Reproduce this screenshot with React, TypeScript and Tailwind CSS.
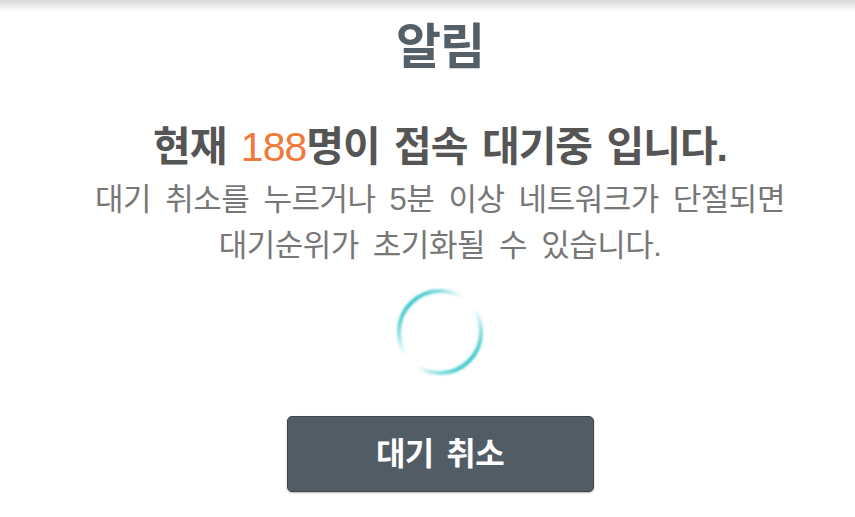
export default function App() {
  const font = { fontFamily: '"Liberation Sans", "Noto Sans CJK KR", sans-serif' };
  return (
    <div className="w-[855px] h-[517px] bg-white relative overflow-hidden" style={font}>
      <div className="absolute top-0 left-0 right-0 h-[12px] bg-gradient-to-b from-[#d9d9d9] to-white" />
      <div className="flex flex-col items-center pl-[25px] pt-[17px]">
        <h1 className="text-[49px] font-bold text-[#545f68] leading-[60px] tracking-[-1px]">알림</h1>
        <p className="mt-[45px] text-[41px] font-bold text-[#555555] leading-[50px] tracking-[-1px] [word-spacing:4px]">
          현재 <span className="text-[#f07a3a] font-normal">188</span>명이 접속 대기중 입니다.
        </p>
        <div className="mt-[5px] text-[31px] text-[#777777] leading-[46px] text-center tracking-[-0.5px] [word-spacing:6px]">
          <p>대기 취소를 누르거나 5분 이상 네트워크가 단절되면</p>
          <p>대기순위가 초기화될 수 있습니다.</p>
        </div>
        <div className="mt-[18px] w-[90px] h-[90px] flex items-center justify-center">
          <svg width="90" height="90" viewBox="0 0 90 90">
            <defs>
              <linearGradient id="g1" x1="0" y1="0" x2="1" y2="1">
                <stop offset="0.1" stopColor="#22bfc0" stopOpacity="1" />
                <stop offset="0.42" stopColor="#22bfc0" stopOpacity="0" />
                <stop offset="0.58" stopColor="#22bfc0" stopOpacity="0" />
                <stop offset="0.9" stopColor="#22bfc0" stopOpacity="1" />
              </linearGradient>
              <filter id="b1">
                <feGaussianBlur stdDeviation="0.8" />
              </filter>
            </defs>
            <circle cx="45" cy="45" r="41" fill="none" stroke="url(#g1)" strokeWidth="4" filter="url(#b1)" />
          </svg>
        </div>
        <button className="mt-[39px] w-[307px] h-[76px] rounded-[5px] bg-[#525c65] border border-[#3f474e] shadow-[0_1px_2px_rgba(0,0,0,0.3)] text-white text-[32px] font-bold tracking-[-0.5px] [word-spacing:4px]">
          대기 취소
        </button>
      </div>
    </div>
  );
}
